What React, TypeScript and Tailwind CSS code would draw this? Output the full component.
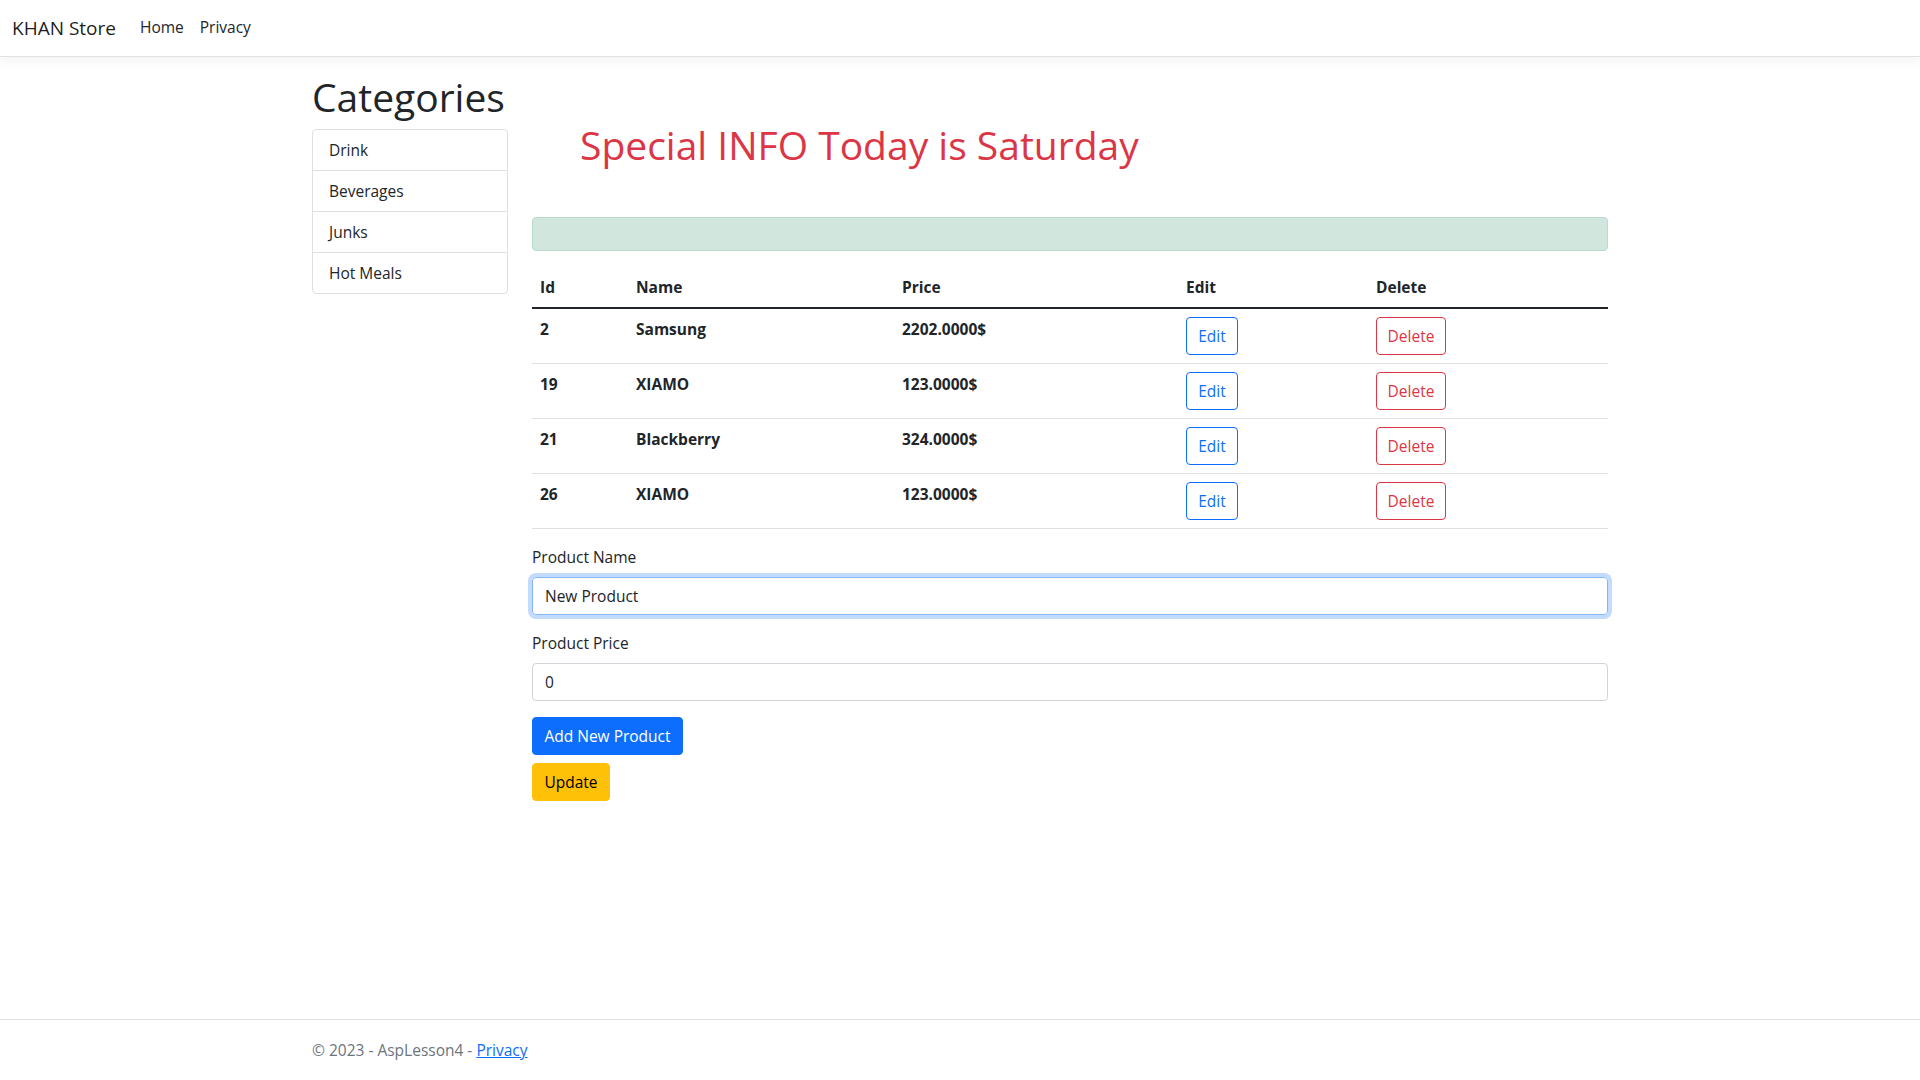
import React from "react";

const categories = ["Drink", "Beverages", "Junks", "Hot Meals"];

const products = [
  { id: 2, name: "Samsung", price: "2202.0000$" },
  { id: 19, name: "XIAMO", price: "123.0000$" },
  { id: 21, name: "Blackberry", price: "324.0000$" },
  { id: 26, name: "XIAMO", price: "123.0000$" },
];

function Navbar() {
  return (
    <header className="border-b border-[#dee2e6] bg-white shadow-[0_4px_12px_rgba(0,0,0,0.05)]">
      <nav className="flex h-14 items-center px-3">
        <a href="#" className="mr-4 text-[19px] leading-[30px] text-black/90">
          KHAN Store
        </a>
        <ul className="flex">
          <li>
            <a href="#" className="block px-2 py-2 text-[#212529]">
              Home
            </a>
          </li>
          <li>
            <a href="#" className="block px-2 py-2 text-[#212529]">
              Privacy
            </a>
          </li>
        </ul>
      </nav>
    </header>
  );
}

function Sidebar() {
  return (
    <aside>
      <h1 className="mb-2 text-[39px] leading-[48px] font-medium text-[#212529]">Categories</h1>
      <ul className="overflow-hidden rounded border border-black/[0.125]">
        {categories.map((c, i) => (
          <li
            key={c}
            className={`px-4 py-2 leading-6 text-[#212529] ${
              i > 0 ? "border-t border-black/[0.125]" : ""
            }`}
          >
            {c}
          </li>
        ))}
      </ul>
    </aside>
  );
}

function ProductsTable() {
  return (
    <table className="mb-4 w-full table-fixed border-collapse text-left text-[#212529]">
      <thead>
        <tr className="border-b-2 border-[#212529]">
          <th className="w-[96px] p-2 leading-6 font-bold">Id</th>
          <th className="w-[266px] p-2 leading-6 font-bold">Name</th>
          <th className="w-[284px] p-2 leading-6 font-bold">Price</th>
          <th className="w-[190px] p-2 leading-6 font-bold">Edit</th>
          <th className="p-2 leading-6 font-bold">Delete</th>
        </tr>
      </thead>
      <tbody>
        {products.map((p) => (
          <tr key={p.id} className="border-b border-[#dee2e6] align-top">
            <td className="p-2 leading-6 font-bold">{p.id}</td>
            <td className="p-2 leading-6 font-bold">{p.name}</td>
            <td className="p-2 leading-6 font-bold">{p.price}</td>
            <td className="p-2">
              <button className="h-[38px] w-[52px] rounded border border-[#0d6efd] leading-6 text-[#0d6efd]">
                Edit
              </button>
            </td>
            <td className="p-2">
              <button className="h-[38px] w-[70px] rounded border border-[#dc3545] leading-6 text-[#dc3545]">
                Delete
              </button>
            </td>
          </tr>
        ))}
      </tbody>
    </table>
  );
}

function ProductForm() {
  return (
    <form className="text-[#212529]" onSubmit={(e) => e.preventDefault()}>
      <div className="mb-4">
        <label className="mb-2 block leading-6">Product Name</label>
        <input
          type="text"
          defaultValue="New Product"
          className="block h-[38px] w-full rounded border border-[#86b7fe] px-3 py-1.5 leading-6 text-[#212529] shadow-[0_0_0_4px_rgba(13,110,253,0.25)] outline-none"
        />
      </div>
      <div className="mb-4">
        <label className="mb-2 block leading-6">Product Price</label>
        <input
          type="text"
          defaultValue="0"
          className="block h-[38px] w-full rounded border border-[#ced4da] px-3 py-1.5 leading-6 text-[#212529] outline-none"
        />
      </div>
      <button className="block h-[38px] w-[151px] rounded border border-[#0d6efd] bg-[#0d6efd] leading-6 text-white">
        Add New Product
      </button>
      <button className="mt-2 block h-[38px] w-[78px] rounded border border-[#ffc107] bg-[#ffc107] leading-6 text-black">
        Update
      </button>
    </form>
  );
}

export default function App() {
  return (
    <div className="flex min-h-screen flex-col bg-white font-['Open_Sans',sans-serif] text-[15.5px] text-[#212529]">
      <Navbar />
      <main className="mx-auto mt-4 w-[1320px] flex-1 px-3">
        <div className="grid grid-cols-[196px_1fr] gap-6">
          <Sidebar />
          <section>
            <div className="p-12">
              <h1 className="text-[39px] leading-[48px] font-medium text-[#dc3545]">
                Special INFO Today is Saturday
              </h1>
            </div>
            <div className="mb-4 h-[34px] rounded border border-[#badbcc] bg-[#d1e7dd]" />
            <ProductsTable />
            <ProductForm />
          </section>
        </div>
      </main>
      <footer className="border-t border-[#dee2e6] leading-[60px] whitespace-nowrap text-[#6c757d]">
        <div className="mx-auto w-[1320px] px-3">
          &copy; 2023 - AspLesson4 -{" "}
          <a href="#" className="text-[#0d6efd] underline">
            Privacy
          </a>
        </div>
      </footer>
    </div>
  );
}
